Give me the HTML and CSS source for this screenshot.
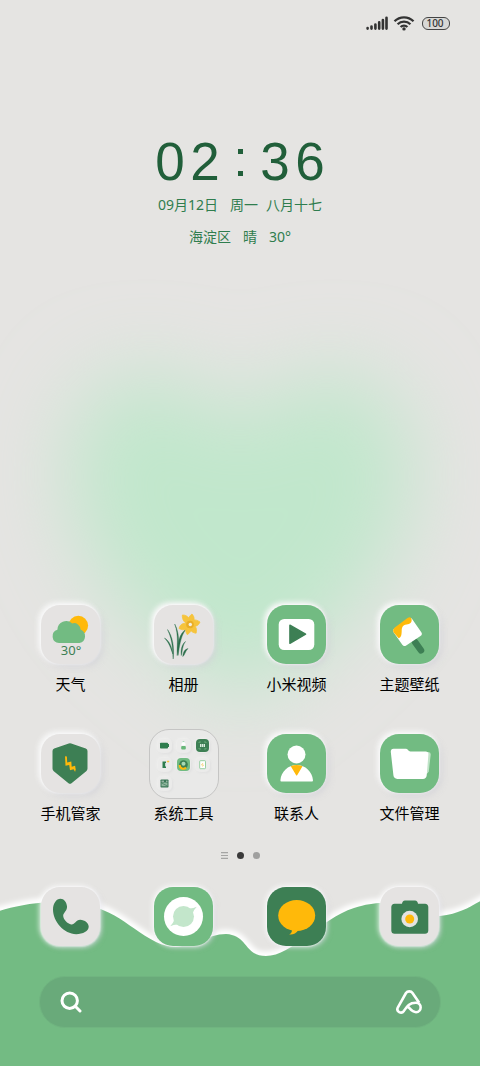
FILE: index.html
```html
<!DOCTYPE html>
<html lang="zh-CN">
<head>
<meta charset="utf-8">
<meta name="viewport" content="width=device-width, initial-scale=1">
<title>主屏幕</title>
<link rel="stylesheet" href="styles.css">
</head>
<body>
<div class="screen">
  <svg class="glow" viewBox="0 0 480 600" preserveAspectRatio="none" aria-hidden="true">
    <defs>
      <filter id="haze" x="-50%" y="-50%" width="200%" height="200%"><feGaussianBlur stdDeviation="42"/></filter>
    </defs>
    <path filter="url(#haze)" fill="#c1e7cc" d="M240 226C210 184 160 165 122 176 70 195 55 260 80 330c27 78 106 130 162 175 56-45 133-97 158-175 25-70 10-135-42-154-38-11-88 8-118 50z"/>
  </svg>

  <header class="status">
    <svg class="signal" viewBox="0 0 22 14" aria-hidden="true">
      <path d="M1.600 12.600v-.6M5.500 12.600v-2M9.400 12.600V8.600M13.200 12.600V6.400M16.900 12.600V4M20.500 12.600V1.800"/>
    </svg>
    <svg class="wifi" viewBox="0 0 22 16" aria-hidden="true">
      <path d="M1.500 6.200a13.500 13.500 0 0 1 19 0M4.600 9.200a9 9 0 0 1 12.800 0M7.600 12a4.800 4.800 0 0 1 6.800 0"/>
      <circle cx="11" cy="13.900" r="1.700"/>
    </svg>
    <span class="battery">100</span>
  </header>

  <section class="clock">
    <time class="time" datetime="02:36"><span>0</span><span>2</span><span class="colon"><i></i><i></i></span><span>3</span><span>6</span></time>
    <p class="line"><span>09月12日</span><span>周一</span><span class="near">八月十七</span></p>
    <p class="line"><span>海淀区</span><span>晴</span><span>30°</span></p>
  </section>

  <main class="apps">
    <button class="app" type="button">
      <svg class="tile light" viewBox="0 0 59 59" aria-hidden="true">
        <circle cx="37.300" cy="20.600" r="9.800" fill="#ffb90a"/>
        <path fill="#72bb82" d="M18 38a6.800 6.800 0 0 1-1.600-13.300A8.900 8.900 0 0 1 31.200 18.400a6.500 6.500 0 0 1 8.300 6.200A7 7 0 0 1 38.500 38z"/>
        <text x="30" y="50" text-anchor="middle" class="temp">30°</text>
      </svg>
      <span class="label">天气</span>
    </button>
    <button class="app" type="button">
      <svg class="tile light" viewBox="0 0 59 59" aria-hidden="true">
        <g fill="#2b6f4b" stroke="#2b6f4b" stroke-width=".4">
          <path d="M13.500 24.500c5 7 7 17 5.700 29.500-.8-5 .5-17-5.700-29.500z"/>
          <path d="M10.500 33c5 3 7.500 9 8.300 16-2-5.500-3.500-11-8.300-16z"/>
          <path d="M20.700 19c4.500 8 5 20 2.500 31.500-.5-9 1.800-20-2.500-31.500z"/>
          <path d="M33 23.500c-5.500 5-7 14-9 27-.8-11 .5-22 9-27z"/>
          <path d="M31.500 36.500c-3.500 2.500-5 8-4.200 14 1.200-4 .9-10 4.200-14z"/>
          <path d="M34 43.500c-3.500.7-5 4-5.200 8 2.200-1.500 2.200-5 5.200-8z"/>
        </g>
        <g fill="#f6c43c" stroke="#f6c43c" stroke-width=".8" stroke-linejoin="round">
          <path d="M36 19.500c-5.500-1-8-4.400-7.600-9.500 5.500 0 8.300 4 7.600 9.500z"/>
          <path d="M36 19.500c-2.800-4-2-7.500 2-10.500 3.500 4 2.500 7.800-2 10.500z"/>
          <path d="M36 19.500c1-5 5-6 10-2.500-2 4.800-6 5.500-10 2.500z"/>
          <path d="M36 19.500c5 0 7.500 3.200 6.100 8.700-5-.6-7.300-4-6.100-8.700z"/>
          <path d="M36 19.500c2.500 4.200 1.200 7.500-2.700 10.200-2.700-4-1.900-7.600 2.700-10.200z"/>
          <path d="M36 19.500c-2 5.200-6 6.500-11 4 1.200-5 5.700-6.500 11-4z"/>
        </g>
        <circle cx="36" cy="19.500" r="3.800" fill="#e9ae27"/>
        <circle cx="36.300" cy="19.500" r="1.700" fill="#f4efdf"/>
      </svg>
      <span class="label">相册</span>
    </button>
    <button class="app" type="button">
      <svg class="tile green" viewBox="0 0 59 59" aria-hidden="true">
        <rect x="11.700" y="14" width="35.600" height="31" rx="5.500" fill="#fff"/>
        <path d="M22.900 20.200 38.600 29.200 22.900 38.300z" fill="#3d7f54" stroke="#3d7f54" stroke-width="1.400" stroke-linejoin="round"/>
      </svg>
      <span class="label">小米视频</span>
    </button>
    <button class="app" type="button">
      <svg class="tile green" viewBox="0 0 59 59" aria-hidden="true">
        <path d="M35 37 41 45.300" stroke="#3d7f54" stroke-width="6.500" stroke-linecap="round"/>
        <path fill="#fff" d="M28.500 13.500q2.300-1.500 3.800.7l9 13q1.500 2.200-.8 3.800L26.200 40.400q-2.300 1.500-3.900-.7L13.700 27.500q-1.500-2.300.8-3.900z"/>
        <path fill="#ffb90a" d="M27.500 13q3.500-1.800 4.100 1.400c.4 3-1.500 4.400-5 5-4.300.8-4.800 3-4.900 6.600-.1 3.500-.4 6.500-3 7.200L13.700 27.500q-1.500-2.300.8-4.700z"/>
      </svg>
      <span class="label">主题壁纸</span>
    </button>
    <button class="app" type="button">
      <svg class="tile light" viewBox="0 0 59 59" aria-hidden="true">
        <path fill="#3d7f54" d="M27.800 9.400q1.200-.5 2.400 0l14.600 5.100q1.700.6 1.700 2.500v17.500q0 1.700-1.300 2.800L30.500 49.200q-1.500 1.200-3 0L12.800 37.300q-1.300-1.100-1.300-2.800V17q0-1.900 1.700-2.500z"/>
        <path fill="#ffb90a" d="m24 22.300 1.900.3.300 5.800 4.100-.8.400 5.200 3.400-1 .8 5-.9-.6.300 2-1.700-3-3.600 1-.8-5.300-3.700.8z"/>
      </svg>
      <span class="label">手机管家</span>
    </button>
    <button class="app" type="button">
      <span class="folder" aria-hidden="true">
        <svg class="mini light" viewBox="0 0 13 13"><rect x="2" y="3.700" width="8" height="5.800" rx=".8" fill="#2f7d4e"/><path d="M10.500 5v3" stroke="#2f7d4e"/></svg>
        <svg class="mini light" viewBox="0 0 13 13"><circle cx="6.500" cy="3" r="1" fill="#a8d9b4"/><path d="M4.500 6.500V5a2 2 0 0 1 4 0v1.500" fill="#fff"/><rect x="4.200" y="7" width="4.600" height="3.500" rx="1" fill="#67b778"/></svg>
        <svg class="mini dark" viewBox="0 0 13 13"><path d="M3 4V3h2M8 3h2v1M3 9v1h2M8 10h2V9" fill="none" stroke="#72bb82" stroke-width=".7"/><path d="M4 5h1.500v3H4zM6 5h1v3H6zM7.500 5H9v3H7.500z" fill="#d8ecdc"/></svg>
        <svg class="mini light" viewBox="0 0 13 13"><path d="M4.500 3.500h3.500V5H7.200v3.500H8V10H4.500z" fill="#2f7d4e"/><path d="m10 2 .5 1.200 1.300.3-1.300.5L10 5l-.4-1-1.300-.5 1.300-.3z" fill="#ffb90a"/></svg>
        <svg class="mini green" viewBox="0 0 13 13"><circle cx="6.500" cy="6.500" r="4.300" fill="#3d7f54"/><path d="M2.700 7a3.600 3.600 0 0 0 6.300 2.500" fill="none" stroke="#ffb90a" stroke-width="2"/><circle cx="6.500" cy="5.800" r="2" fill="#a8d9b4"/></svg>
        <svg class="mini light" viewBox="0 0 13 13"><rect x="3.700" y="2.700" width="5.800" height="8" rx=".8" fill="#fff" stroke="#7fc58d" stroke-width=".8"/><path d="m7 5-1.500 2h2L6.500 8.500" fill="none" stroke="#f3c75a" stroke-width=".7"/></svg>
        <svg class="mini light" viewBox="0 0 13 13"><rect x="2.500" y="2.500" width="8" height="8" rx=".8" fill="#3a7656"/><path d="M3.500 4.200h2.500M8 4.200h1.500" stroke="#e4e4e2" stroke-width=".8"/><path d="M3.500 5.600h6v3.700h-6z" fill="#8fb59d"/><path d="M3.500 6 9.500 9" stroke="#3a7656" stroke-width=".6"/></svg>
      </span>
      <span class="label">系统工具</span>
    </button>
    <button class="app" type="button">
      <svg class="tile green" viewBox="0 0 59 59" aria-hidden="true">
        <circle cx="29.500" cy="20.500" r="9" fill="#fff"/>
        <path fill="#fff" d="M14.300 47.500q-1 0-.9-1.200c.7-8.500 7.600-15.200 16.300-15.200s15.600 6.700 16.300 15.200q0 1.200-.9 1.200z"/>
        <path fill="#ffb90a" d="M23.800 32.300q5.800-2.500 11.700 0l-5.200 8.600q-.7 1-1.300 0z"/>
      </svg>
      <span class="label">联系人</span>
    </button>
    <button class="app" type="button">
      <svg class="tile green" viewBox="0 0 59 59" aria-hidden="true">
        <path fill="#bfe3c7" d="M44 18h4.500q2.400.3 2.200 2.700l-1.900 16.500q-.5 2-2.800 2.800z"/>
        <path fill="#fff" d="M13.500 14.700h12.200q1.500 0 2.300 1.300t2.400 1.400h15.300q2.900.2 2.700 3l-1.700 21q-.5 3.400-3.800 3.500H17.300q-3.500-.2-3.900-3.600L10.800 18q-.2-3 2.700-3.300z"/>
      </svg>
      <span class="label">文件管理</span>
    </button>
  </main>

  <nav class="pages" aria-label="页面">
    <svg class="feed" viewBox="0 0 7 7" aria-hidden="true"><path d="M0 .7h7M0 3.500h7M0 6.300h7"/></svg>
    <span class="dot current"></span>
    <span class="dot"></span>
  </nav>

  <footer class="bottom">
    <svg class="wave" viewBox="0 0 480 196" preserveAspectRatio="none" aria-hidden="true">
      <defs>
        <filter id="soft" x="-5%" y="-10%" width="110%" height="120%"><feGaussianBlur stdDeviation="2.500"/></filter>
      </defs>
      <path class="edge" filter="url(#soft)" d="M-10 44C0 40 26 33 50 32c60-2 72 22 106 40 30 14 46-8 70-8 22 1 18 22 40 22 26 0 54-37 88-48 46-15 55 8 86 8 24-3 30-10 50-20V214H-10z"/>
      <path class="hill" d="M-10 44C0 40 26 33 50 32c60-2 72 22 106 40 30 14 46-8 70-8 22 1 18 22 40 22 26 0 54-37 88-48 46-15 55 8 86 8 24-3 30-10 50-20V214H-10z"/>
    </svg>
    <div class="dock">
      <button class="app" type="button" aria-label="电话">
        <svg class="tile light" viewBox="0 0 59 59" aria-hidden="true">
          <path fill="#3d7f54" d="M19.500 11.700c3.500 0 6 3.200 6.500 7.500.5 4.500-4 6.500-3.800 9.800.2 3.500 4.300 7.800 8 8.500 3.500.5 4.500-4.500 9-4.700 4.700 0 8.600 3.700 8.500 7 0 4.300-5.700 7.400-12.500 7.400C23 47 12 34.500 12 22.500c0-6 3.300-10.800 7.500-10.800z"/>
        </svg>
      </button>
      <button class="app" type="button" aria-label="浏览器">
        <svg class="tile green" viewBox="0 0 59 59" aria-hidden="true">
          <circle cx="29.500" cy="29.500" r="19.500" fill="#fff"/>
          <circle cx="29.500" cy="29.500" r="10.500" fill="#c3e6cb"/>
          <path fill="#c3e6cb" d="M34.500 21.500q4.500.3 8.300-1.700-3 3-4.300 6.700zM24.500 37.500q-4.500-.3-8.300 1.700 3-3 4.300-6.700z"/>
        </svg>
      </button>
      <button class="app" type="button" aria-label="短信">
        <svg class="tile dark" viewBox="0 0 59 59" aria-hidden="true">
          <ellipse cx="29.700" cy="28.500" rx="18.500" ry="15.500" fill="#ffb90a"/>
          <path fill="#ffb90a" d="M24.800 42q.8 3.600-2.600 5.500 5.500.8 9.300-4.500z"/>
        </svg>
      </button>
      <button class="app" type="button" aria-label="相机">
        <svg class="tile light" viewBox="0 0 59 59" aria-hidden="true">
          <path fill="#3d7f54" d="M25 13.400h10q2.700.2 3 3.300h7q3.200.2 3.300 3.300v23.500q-.2 3.200-3.300 3.300H14.600q-3.100-.1-3.300-3.300V20q.1-3.100 3.300-3.300h7.400q.3-3.100 3-3.300z"/>
          <circle cx="29.700" cy="32" r="8.300" fill="#e4e3e1"/>
          <circle cx="29.700" cy="32" r="4.500" fill="#ffb90a"/>
        </svg>
      </button>
    </div>
    <form class="search" role="search">
      <svg class="lens" viewBox="0 0 22 22" aria-hidden="true"><circle cx="9.700" cy="9.700" r="7.700"/><path d="m15.300 15.300 4.700 4.700"/></svg>
      <input class="query" type="search" aria-label="搜索">
      <button class="assistant" type="button" aria-label="小爱同学">
        <svg viewBox="0 0 26 24" aria-hidden="true"><path d="M23.200 12.800 16.500 2.900Q15.500 1.400 13.300 1.400T10 3L1.900 17.300c-2.200 4.500 3.600 7.100 6 3.600 3.200-5 5.600-8.200 12.100-8.100 6.500.3 5.900 9.300 0 9.400-4.100 0-5.800-3.500-8.500-6"/></svg>
      </button>
    </form>
  </footer>
</div>
</body>
</html>
```
FILE: styles.css
```css
* { box-sizing: border-box; }

body {
  margin: 0;
  background: #e5e4e2;
  font-family: "Noto Sans CJK SC", sans-serif;
}

button {
  padding: 0;
  border: 0;
  background: none;
  color: inherit;
  font: inherit;
}

.screen {
  position: relative;
  display: flex;
  flex-direction: column;
  min-height: 100vh;
  overflow: hidden;
}

.screen > * { position: relative; }

.screen > .glow {
  position: absolute;
  top: 19%;
  left: 0;
  width: 100%;
  height: 56%;
}

.status {
  display: flex;
  align-items: center;
  justify-content: flex-end;
  gap: 5px;
  height: 46px;
  padding: 0 30px;
}

.signal { width: 22px; height: 14px; fill: none; stroke: #333; stroke-width: 2.6; stroke-linecap: round; }
.wifi { width: 22px; height: 16px; fill: none; stroke: #333; stroke-width: 2.3; }
.wifi circle { fill: #333; stroke: none; }

.battery {
  width: 28px;
  height: 13px;
  margin-left: 2px;
  padding-right: 2px;
  border: 1px solid #444;
  border-radius: 6px;
  background: #d8d8d6;
  color: #333;
  font: 500 10px/11px "Noto Sans", sans-serif;
  text-align: center;
}

.clock {
  display: flex;
  flex-direction: column;
  align-items: center;
  padding-top: 86px;
  color: #2f7d4e;
}

.time {
  display: flex;
  margin-bottom: 3px;
  color: #215f3a;
  font: 53px/60px "Liberation Sans", sans-serif;
}

.time span { width: 35px; text-align: center; }

.time .colon {
  display: flex;
  flex-direction: column;
  justify-content: center;
  align-items: center;
  gap: 17px;
}

.colon i { width: 5px; height: 5px; background: currentColor; }

.line {
  display: flex;
  gap: 12px;
  margin: 0 0 12px;
  font-family: "Noto Sans", "Noto Sans CJK SC", sans-serif;
  font-size: 14px;
  line-height: 20px;
}

.line .near { margin-left: -4px; }

.apps, .dock {
  display: grid;
  grid-template-columns: repeat(4, 1fr);
  padding: 0 14px;
}

.apps {
  row-gap: 38px;
  margin-top: auto;
}

.app {
  display: flex;
  flex-direction: column;
  align-items: center;
  gap: 8px;
}

.tile {
  width: 59px;
  height: 59px;
  border-radius: 19px;
  box-shadow: -2px -2px 5px 1px #f8f8f8, 3px 3px 6px #d2d2d7c0, 0 0 1px 1px #efefef;
}

.light { background: #e5e3e2; }
.green { background: #72bb82; }
.dark { background: #3d7f54; }

.temp { fill: #3d7f54; font: 13px "Noto Sans", sans-serif; }

.label {
  color: #000;
  font-size: 15px;
  line-height: 24px;
  white-space: nowrap;
}

.folder {
  display: grid;
  grid-template-columns: repeat(3, 13px);
  align-content: start;
  justify-content: center;
  gap: 6px;
  width: 70px;
  height: 70px;
  margin: -5px 0 -6px;
  padding-top: 9px;
  border: 1px solid #c5c5c4;
  border-radius: 20px;
  background: #e9e9e8;
}

.mini {
  width: 13px;
  height: 13px;
  border-radius: 4px;
  box-shadow: 0 0 2px 1px #f0f0ef, 1px 1px 2px 1px #dcdcdc;
}

.mini.light { background: #ebebea; }

.pages {
  display: flex;
  align-items: center;
  justify-content: center;
  gap: 9px;
  height: 45px;
  padding-top: 16px;
}

.feed { width: 7px; height: 7px; stroke: #a5a5a4; stroke-width: 1.2; }
.dot { width: 7px; height: 7px; border-radius: 50%; background: #a0a09f; }
.current { background: #3a3a3a; }

.bottom {
  padding: 17px 0 38px;
}

.wave {
  position: absolute;
  inset: 0;
  width: 100%;
  height: 100%;
}

.edge { fill: none; stroke: #fff; stroke-width: 9; }
.hill { fill: #73bb83; }

.dock, .search { position: relative; }

.dock .tile { box-shadow: -1px -1px 5px 1px #ffffffb0, 2px 2px 5px #d2d2e080, 0 0 1px 1px #ffffff60; }

.search {
  display: flex;
  align-items: center;
  gap: 12px;
  height: 52px;
  margin: 30px 39px 0;
  padding: 0 18px 0 20px;
  border: 1px solid #70b480;
  border-radius: 26px;
  background: #69aa7a;
}

.lens { flex: none; width: 22px; height: 22px; fill: none; stroke: #fff; stroke-width: 3; stroke-linecap: round; }

.query {
  flex: 1;
  min-width: 0;
  border: 0;
  outline: 0;
  background: transparent;
  color: #fff;
  font: inherit;
}

.assistant svg { display: block; width: 26px; height: 24px; fill: none; stroke: #fff; stroke-width: 2.6; stroke-linejoin: round; }
```
